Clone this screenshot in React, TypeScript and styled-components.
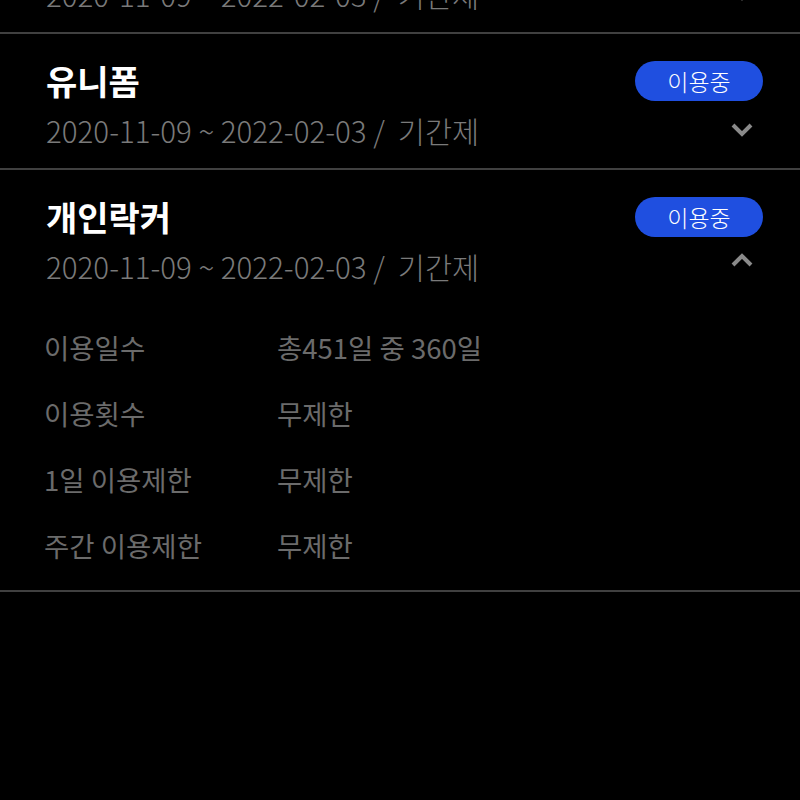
import React from 'react';
import styled, { createGlobalStyle } from 'styled-components';

const GlobalStyle = createGlobalStyle`
  html, body {
    margin: 0;
    padding: 0;
    background: #000;
    overflow: hidden;
  }
  body {
    font-family: 'Noto Sans CJK KR', 'Noto Sans', sans-serif;
  }
`;

const Page = styled.div`
  width: 800px;
  height: 800px;
  background: #000;
  overflow: hidden;
`;

const List = styled.ul`
  list-style: none;
  margin: -102px 0 0;
  padding: 0;
`;

const Item = styled.li<{ $open: boolean }>`
  border-bottom: 2px solid #404040;
  padding: 27px 37px ${(p) => (p.$open ? '12px' : '20px')} 46px;
`;

const TitleRow = styled.div`
  display: flex;
  align-items: center;
  justify-content: space-between;
`;

const Title = styled.h2`
  margin: 0;
  font-size: 34px;
  line-height: 40px;
  font-weight: 700;
  color: #fff;
`;

const Badge = styled.span`
  display: inline-flex;
  align-items: center;
  justify-content: center;
  width: 128px;
  height: 40px;
  border-radius: 20px;
  background: #1f4fe0;
  color: #fff;
  font-size: 23px;
  font-weight: 300;
`;

const DateRow = styled.div`
  display: flex;
  align-items: center;
  justify-content: space-between;
  margin-top: 11px;
`;

const Period = styled.span`
  font-size: 29.5px;
  line-height: 36px;
  font-weight: 300;
  color: #7a7a7a;
  white-space: pre;
`;

const Toggle = styled.svg<{ $open: boolean }>`
  width: 22px;
  height: 14px;
  margin-right: 10px;
  transform: ${(p) => (p.$open ? 'rotate(180deg) translateY(6px)' : 'none')};
`;

const Details = styled.dl`
  display: grid;
  grid-template-columns: 231px 1fr;
  margin: 30px 0 0;
  padding: 0;
`;

const Label = styled.dt`
  margin: 0 0 0 -2px;
  font-size: 27.5px;
  line-height: 66px;
  color: #6b6b6b;
`;

const Value = styled.dd`
  margin: 0;
  font-size: 27.5px;
  line-height: 66px;
  color: #6b6b6b;
`;

type Membership = {
  name: string;
  period: string;
  open: boolean;
  details?: [string, string][];
};

const items: Membership[] = [
  { name: '회원권', period: '2020-11-09 ~ 2022-02-03 /  기간제', open: false },
  { name: '유니폼', period: '2020-11-09 ~ 2022-02-03 /  기간제', open: false },
  {
    name: '개인락커',
    period: '2020-11-09 ~ 2022-02-03 /  기간제',
    open: true,
    details: [
      ['이용일수', '총451일 중 360일'],
      ['이용횟수', '무제한'],
      ['1일 이용제한', '무제한'],
      ['주간 이용제한', '무제한'],
    ],
  },
];

const Chevron = ({ open }: { open: boolean }) => (
  <Toggle $open={open} viewBox="0 0 22 14">
    <polyline points="2,2 11,11 20,2" fill="none" stroke="#8a8a8a" strokeWidth="4" />
  </Toggle>
);

export default function App() {
  return (
    <Page>
      <GlobalStyle />
      <List>
        {items.map((item) => (
          <Item key={item.name} $open={item.open}>
            <TitleRow>
              <Title>{item.name}</Title>
              <Badge>이용중</Badge>
            </TitleRow>
            <DateRow>
              <Period>{item.period}</Period>
              <Chevron open={item.open} />
            </DateRow>
            {item.open && item.details && (
              <Details>
                {item.details.map(([k, v]) => (
                  <React.Fragment key={k}>
                    <Label>{k}</Label>
                    <Value>{v}</Value>
                  </React.Fragment>
                ))}
              </Details>
            )}
          </Item>
        ))}
      </List>
    </Page>
  );
}
